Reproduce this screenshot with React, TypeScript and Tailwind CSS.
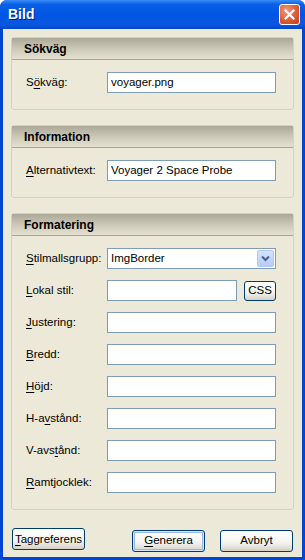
import React from 'react'

const font = { fontFamily: '"Liberation Sans", Arial, sans-serif' }

function Label({ pre = '', u, post }: { pre?: string; u: string; post: string }) {
  return (
    <span className="w-[81px] shrink-0 text-[11.5px] text-black">
      {pre}
      <span className="underline underline-offset-[2px]">{u}</span>
      {post}
    </span>
  )
}

function TextBox({ value = '', w = 'w-[169px]' }: { value?: string; w?: string }) {
  return (
    <div className={`${w} h-[21px] shrink-0 border border-[#7F9DB9] bg-white px-[3px] text-[11.5px] leading-[19px] text-black`}>
      {value}
    </div>
  )
}

function Section({ title, children }: { title: string; children: React.ReactNode }) {
  return (
    <div className="rounded-[3px] border border-[#D5D2C0] bg-[#ECE9D8]">
      <div className="flex h-[22px] items-center border-b border-[#A8A590] bg-[linear-gradient(#ABA897,#C8C5B3_45%,#E4E1D1)] pl-[12px] text-[12px] font-bold text-black">
        {title}
      </div>
      <div className="flex flex-col gap-[11px] pb-[16px] pl-[14px] pt-[12px]">{children}</div>
    </div>
  )
}

function Row({ children }: { children: React.ReactNode }) {
  return <div className="flex h-[21px] items-center">{children}</div>
}

function Button({ children, primary = false }: { children: React.ReactNode; primary?: boolean }) {
  return (
    <button
      className={`h-[22px] w-[73px] rounded-[3px] border border-[#003C74] bg-[linear-gradient(#FFFFFF,#F3F3EE_60%,#D6D0C5)] text-[11.5px] text-black ${
        primary ? 'shadow-[inset_0_0_0_1px_#CEE7FF,inset_0_0_0_2px_#98B8EA]' : ''
      }`}
    >
      {children}
    </button>
  )
}

export default function App() {
  return (
    <div className="flex h-[560px] w-[305px] flex-col overflow-hidden rounded-t-[7px] bg-[#0046D5]" style={font}>
      <div className="flex h-[29px] shrink-0 items-center justify-between bg-[linear-gradient(#3A8CF8,#0A5FE6_15%,#0055E5_50%,#0A57DE_85%,#0046C8)] pl-[8px] pr-[5px]">
        <span className="text-[14px] font-bold text-white [text-shadow:1px_1px_#0A1A70]">Bild</span>
        <div className="flex h-[21px] w-[21px] items-center justify-center rounded-[3px] border border-white bg-[radial-gradient(circle_at_35%_30%,#F19A7C,#E05A33_55%,#C23B15)]">
          <svg width="11" height="11" viewBox="0 0 11 11">
            <path d="M1.5 1.5 L9.5 9.5 M9.5 1.5 L1.5 9.5" stroke="white" strokeWidth="2.2" strokeLinecap="square" />
          </svg>
        </div>
      </div>
      <div className="mx-[3px] mb-[3px] flex flex-1 flex-col gap-[15px] bg-[#ECE9D8] px-[8px] pt-[8px]">
        <Section title="Sökväg">
          <Row>
            <Label pre="S" u="ö" post="kväg:" />
            <TextBox value="voyager.png" />
          </Row>
        </Section>
        <Section title="Information">
          <Row>
            <Label u="A" post="lternativtext:" />
            <TextBox value="Voyager 2 Space Probe" />
          </Row>
        </Section>
        <Section title="Formatering">
          <Row>
            <Label u="S" post="tilmallsgrupp:" />
            <div className="flex h-[21px] w-[169px] items-center justify-between border border-[#7F9DB9] bg-white pl-[3px] pr-[1px] text-[11.5px]">
              <span>ImgBorder</span>
              <div className="flex h-[17px] w-[17px] items-center justify-center rounded-[2px] border border-[#B4C8F5] bg-[linear-gradient(#D5E3FD,#B5CBF9)]">
                <svg width="9" height="7" viewBox="0 0 9 7">
                  <path d="M1 1.5 L4.5 5 L8 1.5" stroke="#4D6185" strokeWidth="2" fill="none" />
                </svg>
              </div>
            </div>
          </Row>
          <Row>
            <Label u="L" post="okal stil:" />
            <TextBox w="w-[130px]" />
            <button className="ml-[7px] h-[20px] w-[32px] rounded-[3px] border border-[#003C74] bg-[linear-gradient(#FFFFFF,#F3F3EE_60%,#D6D0C5)] text-[11.5px] text-black">
              CSS
            </button>
          </Row>
          <Row>
            <Label u="J" post="ustering:" />
            <TextBox />
          </Row>
          <Row>
            <Label u="B" post="redd:" />
            <TextBox />
          </Row>
          <Row>
            <Label u="H" post="öjd:" />
            <TextBox />
          </Row>
          <Row>
            <Label pre="H-a" u="v" post="stånd:" />
            <TextBox />
          </Row>
          <Row>
            <Label pre="V-avs" u="t" post="ånd:" />
            <TextBox />
          </Row>
          <Row>
            <Label u="R" post="amtjocklek:" />
            <TextBox />
          </Row>
        </Section>
        <div className="mt-[2px] flex items-center pl-[1px]">
          <Button>
            <span className="underline underline-offset-[2px]">T</span>aggreferens
          </Button>
          <div className="ml-[47px]">
            <Button primary>
              <span className="underline underline-offset-[2px]">G</span>enerera
            </Button>
          </div>
          <div className="ml-[15px]">
            <Button>Avbryt</Button>
          </div>
        </div>
      </div>
    </div>
  )
}
